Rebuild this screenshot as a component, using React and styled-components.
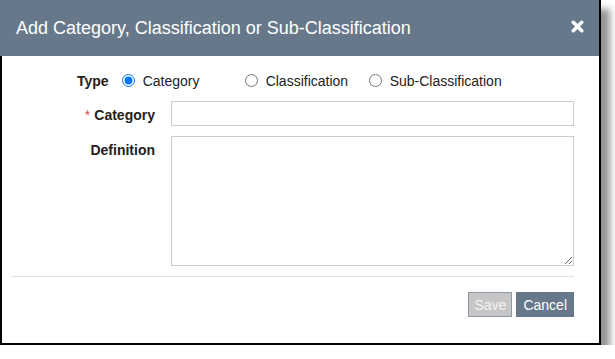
import React, { useState } from "react";
import styled, { createGlobalStyle } from "styled-components";

const GlobalStyle = createGlobalStyle`
  body {
    margin: 0;
    background: #fff;
    font-family: "Liberation Sans", Arial, sans-serif;
  }
`;

const Dialog = styled.div`
  width: 601px;
  height: 345px;
  box-sizing: border-box;
  display: flex;
  flex-direction: column;
  background: #fff;
  border-right: 2px solid #000;
  border-bottom: 2px solid #000;
  box-shadow: 9px 9px 7px rgba(0, 0, 0, 0.42);
`;

const Header = styled.div`
  height: 56px;
  flex: none;
  display: flex;
  align-items: center;
  justify-content: space-between;
  padding: 0 15px 0 16px;
  background: #66788a;
  color: #fff;
`;

const Title = styled.h4`
  margin: 0;
  font-size: 18px;
  font-weight: 400;
`;

const CloseBtn = styled.button`
  background: transparent;
  border: none;
  padding: 0;
  width: 13px;
  height: 13px;
  display: flex;
  margin-top: -4px;
  cursor: pointer;
`;

const Body = styled.div`
  flex: 1;
  display: flex;
  flex-direction: column;
  border-left: 2px solid #000;
  padding: 0 25px 0 9px;
`;

const Form = styled.div`
  display: grid;
  grid-template-columns: 144px 1fr;
  column-gap: 16px;
  row-gap: 10px;
  padding: 14px 0 10px;
  border-bottom: 1px solid #e2e2e2;
`;

const Label = styled.label`
  text-align: right;
  font-size: 14px;
  font-weight: 700;
  color: #222;
  padding-top: ${(p) => p.$top || 6}px;
`;

const Req = styled.span`
  color: #d9534f;
  font-weight: 400;
  margin-right: 4px;
`;

const TypeRow = styled.div`
  grid-column: 1 / span 2;
  display: flex;
  align-items: center;
  padding-left: 66px;
  height: 21px;
`;

const TypeLabel = styled.span`
  font-size: 14px;
  font-weight: 700;
  color: #222;
  margin-right: 10px;
`;

const RadioOpt = styled.label`
  display: flex;
  align-items: center;
  font-size: 14px;
  color: #222;
  width: ${(p) => p.$w || "auto"};
  input {
    margin: 0 8px 0 3px;
    width: 13px;
    height: 13px;
  }
`;

const TextInput = styled.input`
  height: 25px;
  box-sizing: border-box;
  border: 1px solid #ccc;
  padding: 2px 6px;
  font-size: 14px;
  font-family: inherit;
  &:focus {
    outline: none;
  }
`;

const TextArea = styled.textarea`
  height: 130px;
  box-sizing: border-box;
  border: 1px solid #ccc;
  padding: 4px 6px;
  font-size: 14px;
  font-family: inherit;
  &:focus {
    outline: none;
  }
`;

const Footer = styled.div`
  display: flex;
  justify-content: flex-end;
  gap: 4px;
  padding-top: 15px;
`;

const Btn = styled.button`
  height: 25px;
  padding: 0 ${(p) => (p.$primary ? "7px" : "6px")};
  border: none;
  font-family: inherit;
  font-size: 14px;
  color: ${(p) => (p.$disabled ? "#f2f2f2" : "#fff")};
  background: ${(p) => (p.$disabled ? "#c6c6c6" : "#66788a")};
  box-shadow: ${(p) => (p.$disabled ? "inset 0 0 0 1px #8c9aa8" : "none")};
  cursor: ${(p) => (p.$disabled ? "default" : "pointer")};
`;

const App = () => {
  const [type, setType] = useState("category");

  return (
    <>
      <GlobalStyle />
      <Dialog>
        <Header>
          <Title>Add Category, Classification or Sub-Classification</Title>
          <CloseBtn type="button" aria-label="Close">
            <svg width="13" height="13" viewBox="0 0 13 13">
              <path
                d="M2.3 2.3 L10.7 10.7 M10.7 2.3 L2.3 10.7"
                stroke="#fff"
                strokeWidth="3.6"
                strokeLinecap="round"
              />
            </svg>
          </CloseBtn>
        </Header>
        <Body>
          <Form>
            <TypeRow>
              <TypeLabel>Type</TypeLabel>
              <RadioOpt $w="123px">
                <input
                  type="radio"
                  name="type"
                  checked={type === "category"}
                  onChange={() => setType("category")}
                />
                Category
              </RadioOpt>
              <RadioOpt $w="124px">
                <input
                  type="radio"
                  name="type"
                  checked={type === "classification"}
                  onChange={() => setType("classification")}
                />
                Classification
              </RadioOpt>
              <RadioOpt>
                <input
                  type="radio"
                  name="type"
                  checked={type === "sub"}
                  onChange={() => setType("sub")}
                />
                Sub-Classification
              </RadioOpt>
            </TypeRow>
            <Label>
              <Req>*</Req>Category
            </Label>
            <TextInput type="text" />
            <Label $top={6}>Definition</Label>
            <TextArea />
          </Form>
          <Footer>
            <Btn type="button" $disabled>
              Save
            </Btn>
            <Btn type="button" $primary>
              Cancel
            </Btn>
          </Footer>
        </Body>
      </Dialog>
    </>
  );
};

export default App;
